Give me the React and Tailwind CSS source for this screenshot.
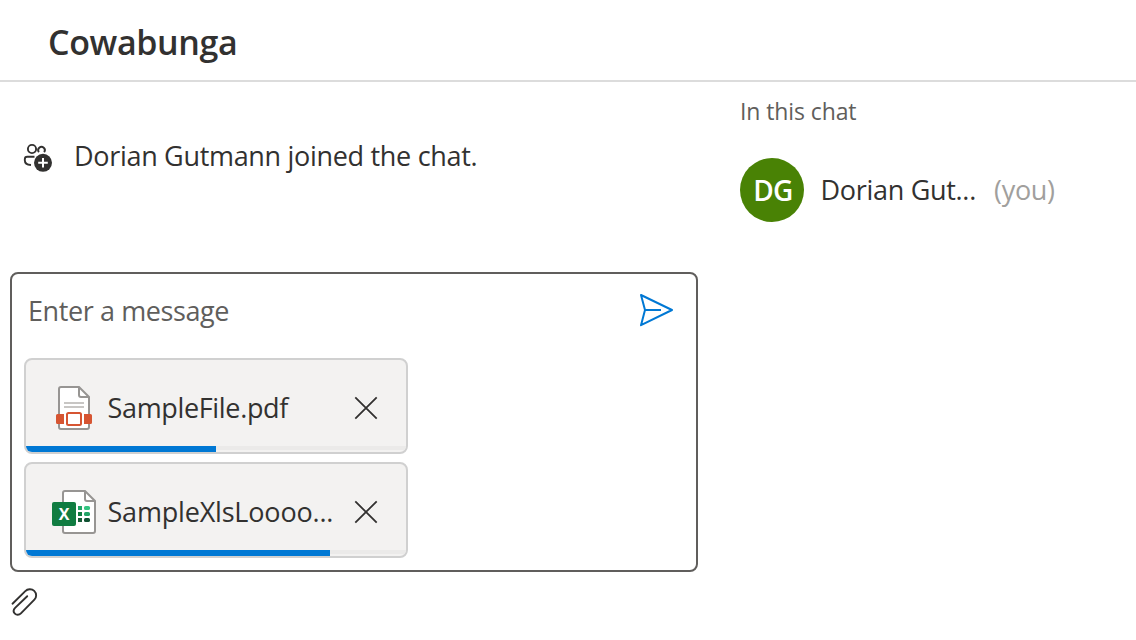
import React from 'react';

function PeopleAddIcon() {
  return (
    <svg className="h-8 w-8 shrink-0" viewBox="0 0 32 32" fill="none" stroke="#323130" strokeWidth="1.9">
      <circle cx="10" cy="7" r="4.1" />
      <path d="M16.900 10.200a3.300 3.300 0 1 1 5.200 0" />
      <path d="M12.500 14.800H5.300c-1.500 0-2.500 1-2.500 2.400v1c0 2.900 2.200 4.600 6.200 4.800" />
      <circle cx="21" cy="20.800" r="9" fill="#323130" stroke="none" />
      <path d="M21 16v9.600M16.200 20.800h9.600" stroke="#fff" strokeWidth="2" />
    </svg>
  );
}

function SendIcon() {
  return (
    <svg className="h-9 w-9 shrink-0" viewBox="0 0 36 36" fill="none" stroke="#0078d4" strokeWidth="2" strokeLinejoin="round">
      <path d="M3 3 34 18 3 33.200 7 18ZM7 18h16" />
    </svg>
  );
}

function PdfIcon() {
  return (
    <svg className="h-12 w-12 shrink-0" viewBox="0 0 48 48" fill="none">
      <path d="M12 3h18l10 10v30a2 2 0 0 1-2 2H12a2 2 0 0 1-2-2V5a2 2 0 0 1 2-2Z" fill="#fff" stroke="#979593" strokeWidth="2" />
      <path d="M30 3v8a2 2 0 0 0 2 2h8" stroke="#979593" strokeWidth="2" />
      <path d="M15 19h20M15 23h20" stroke="#c8c6c4" strokeWidth="2" />
      <path d="M8.500 30H15v10H8.500A1.500 1.500 0 0 1 7 38.500V31.500A1.500 1.500 0 0 1 8.500 30ZM35 30h6.500a1.500 1.500 0 0 1 1.500 1.500v7a1.500 1.500 0 0 1-1.500 1.500H35Z" fill="#d65532" />
      <rect x="15" y="27" width="20" height="16" fill="#fff" />
      <rect x="18" y="29" width="14" height="12" rx="1.500" fill="#fff" stroke="#d65532" strokeWidth="2" />
    </svg>
  );
}

function ExcelIcon() {
  return (
    <svg className="h-12 w-12 shrink-0" viewBox="0 0 48 48" fill="none">
      <path d="M16 3h20l10 10v30a2 2 0 0 1-2 2H16a2 2 0 0 1-2-2V5a2 2 0 0 1 2-2Z" fill="#fff" stroke="#979593" strokeWidth="2" />
      <path d="M36 3v8a2 2 0 0 0 2 2h8" stroke="#979593" strokeWidth="2" />
      <path d="M29 18h4v4h-4Z" fill="#21a366" />
      <path d="M29 24h4v4h-4Z" fill="#107c41" />
      <path d="M29 30h4v4h-4Z" fill="#185c37" />
      <rect x="35" y="18" width="6" height="4" rx="1.600" fill="#33c481" />
      <rect x="35" y="24" width="6" height="4" rx="1.600" fill="#21a366" />
      <rect x="35" y="30" width="6" height="4" rx="1.600" fill="#0f5132" />
      <rect x="3" y="14" width="24" height="24" rx="2" fill="#107c41" />
      <text x="15.200" y="32" textAnchor="middle" fill="#fff" fontFamily="Open Sans, sans-serif" fontWeight="700" fontSize="16">X</text>
    </svg>
  );
}

function CloseIcon() {
  return (
    <svg className="h-6 w-6 shrink-0" viewBox="0 0 24 24" fill="none" stroke="#323130" strokeWidth="1.800">
      <path d="m1.300 1.300 21.400 21.400M22.700 1.300 1.300 22.700" />
    </svg>
  );
}

function PaperclipIcon() {
  return (
    <svg className="h-8 w-8" viewBox="0 0 32 32" fill="none" stroke="#323130" strokeWidth="1.900" strokeLinecap="round">
      <path d="M2.500 16.700 15.300 4.100C17.500 1.900 21.700 1.500 24.200 3.900c2.700 2.600 2.400 6.500.2 8.800L10.900 26.400c-1.800 1.800-4.500 1.800-6 .2-1.600-1.600-1.500-4 .2-5.800L17.200 9.200" />
    </svg>
  );
}

function Attachment({ icon, name, percent, nameClass }) {
  return (
    <div className="flex h-24 w-96 flex-col overflow-hidden rounded-lg border-2 border-[#d0d0d0] bg-[#f3f2f1]">
      <div className="flex h-[86px] items-center pt-2.5 pl-[23px]">
        {icon}
        <div className={`ml-[10.5px] w-[246.5px] whitespace-nowrap text-[27px] leading-9 ${nameClass}`}>{name}</div>
        <CloseIcon />
      </div>
      <div className="h-1 bg-[#ebeae9]">
        <div className="h-1.5 bg-[#0078d4]" style={{ width: `${percent}%` }} />
      </div>
    </div>
  );
}

export default function App() {
  return (
    <div className="flex h-[640px] w-[1136px] flex-col overflow-hidden bg-white font-['Open_Sans',sans-serif] text-[#323130]">
      <header className="flex h-[82px] items-center border-b-2 border-[#dcdcdc] pl-12">
        <h1 className="pt-1 text-[34px] leading-10 font-semibold tracking-[-0.36px]">Cowabunga</h1>
      </header>
      <div className="flex flex-1">
        <main className="flex w-[698px] flex-col pl-2.5">
          <div className="flex h-[190px] items-start pt-[56px] pl-3">
            <div className="pt-1"><PeopleAddIcon /></div>
            <p className="ml-5 whitespace-nowrap text-[27px] leading-9 tracking-[-0.31px]">Dorian Gutmann joined the chat.</p>
          </div>
          <section className="flex h-[300px] flex-col rounded-lg border-2 border-[#605e5c] pl-3">
            <div className="flex h-[84px] items-center justify-between pr-[22px] pl-1">
              <span className="-mt-2.5 text-[27px] leading-9 tracking-[-0.4px] text-[#605e5c]">Enter a message</span>
              <div className="-mt-3"><SendIcon /></div>
            </div>
            <div className="flex flex-col gap-2">
              <Attachment icon={<PdfIcon />} name="SampleFile.pdf" percent={50} nameClass="tracking-[-0.34px]" />
              <Attachment icon={<ExcelIcon />} name="SampleXlsLoooo..." percent={80} nameClass="tracking-[-0.19px]" />
            </div>
          </section>
          <div className="pt-[15px]"><PaperclipIcon /></div>
        </main>
        <aside className="pl-[42px]">
          <h2 className="pt-[13px] text-[23px] leading-8 tracking-[-0.1px] text-[#605e5c]">In this chat</h2>
          <div className="mt-[31px] flex items-center">
            <div className="flex h-16 w-16 items-center justify-center rounded-full bg-[#498205] pl-0.5 text-[28px] font-semibold tracking-[-0.7px] text-white">DG</div>
            <span className="ml-[16.5px] w-[173.5px] whitespace-nowrap text-[27px] leading-9 tracking-[-0.3px]">Dorian Gut...</span>
            <span className="text-[27px] leading-9 tracking-[-0.3px] text-[#a19f9d]">(you)</span>
          </div>
        </aside>
      </div>
    </div>
  );
}
